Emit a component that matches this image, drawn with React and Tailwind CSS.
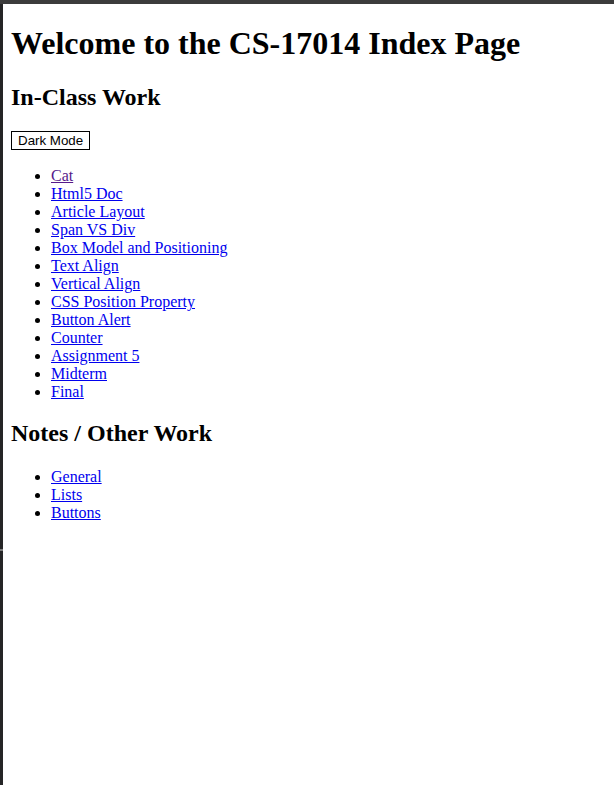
import React from 'react';

const inClass = [
    { label: 'Cat', visited: true },
    { label: 'Html5 Doc' },
    { label: 'Article Layout' },
    { label: 'Span VS Div' },
    { label: 'Box Model and Positioning' },
    { label: 'Text Align' },
    { label: 'Vertical Align' },
    { label: 'CSS Position Property' },
    { label: 'Button Alert' },
    { label: 'Counter' },
    { label: 'Assignment 5' },
    { label: 'Midterm' },
    { label: 'Final' },
];

const notes = [{ label: 'General' }, { label: 'Lists' }, { label: 'Buttons' }];

function LinkList({ items }) {
    return (
        <ul className="list-disc pl-[40px] my-[16px]">
            {items.map((item) => (
                <li key={item.label} className="leading-[18px]">
                    <a
                        href="#"
                        className={item.visited ? 'underline text-[#551a8b]' : 'underline text-[#0000ee]'}
                    >
                        {item.label}
                    </a>
                </li>
            ))}
        </ul>
    );
}

export default function App() {
    return (
        <div className="flex flex-col min-h-screen bg-white">
            <div className="h-[4px] bg-[#3c3c3c]" />
            <div className="flex flex-1">
                <div className="w-[3px] flex flex-col">
                    <div className="h-[545px] bg-[#252526]" />
                    <div className="h-[2px] bg-[#7a7a7a]" />
                    <div className="flex-1 bg-[#252526]" />
                </div>
                <div className="flex-1 p-[8px] text-black text-[16px] font-['Liberation_Serif',serif]">
                    <h1 className="text-[32px] font-bold leading-[37px] mt-[13.4px] mb-[21.44px]">
                        Welcome to the CS-17014 Index Page
                    </h1>
                    <h2 className="text-[24px] font-bold leading-[27.6px] my-[19.92px]">In-Class Work</h2>
                    <div className="flex pb-[1px]">
                        <button
                            type="button"
                            className="h-[19px] border border-black bg-white px-[6px] text-[13.33px] leading-[15px] font-['Liberation_Sans',Arial,sans-serif]"
                        >
                            Dark Mode
                        </button>
                    </div>
                    <LinkList items={inClass} />
                    <h2 className="text-[24px] font-bold leading-[27.6px] mt-[19px] mb-[19.92px]">Notes / Other Work</h2>
                    <LinkList items={notes} />
                </div>
            </div>
        </div>
    );
}
